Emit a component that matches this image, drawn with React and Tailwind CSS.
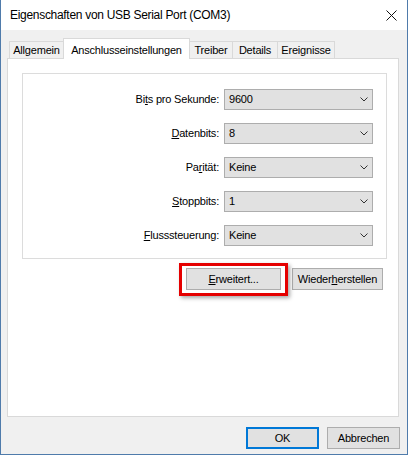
import React from "react";

const dialogFont = { fontFamily: '"Liberation Sans", Arial, sans-serif' };

function Chevron() {
  return (
    <svg width="8" height="5" viewBox="0 0 8 5" className="text-[#333]">
      <polyline points="0.5,0.5 4,4 7.5,0.5" fill="none" stroke="currentColor" strokeWidth="1" />
    </svg>
  );
}

function Combo({ label, value }) {
  return (
    <div className="flex items-center justify-end pr-[13px]">
      <span className="text-[11px] tracking-[-0.2px] text-black">{label}</span>
      <div className="ml-[5px] flex h-[21px] w-[149px] items-center justify-between border border-[#adadad] bg-[#e1e1e1] pl-[4px] pr-[4px]">
        <span className="text-[11px] tracking-[-0.2px] text-black">{value}</span>
        <Chevron />
      </div>
    </div>
  );
}

const tabs = [
  { name: "Allgemein", w: "w-[55px]" },
  { name: "Anschlusseinstellungen", w: "w-[127px]", active: true },
  { name: "Treiber", w: "w-[44px]" },
  { name: "Details", w: "w-[46px]" },
  { name: "Ereignisse", w: "w-[58px]" }
];

export default function App() {
  return (
    <div className="flex h-[455px] w-[408px] flex-col border-x border-b border-[#4f7bab] bg-[#f0f0f0]" style={dialogFont}>
      {/* title bar */}
      <div className="flex h-[30px] items-center justify-between bg-white pl-[9px] pr-[10px]">
        <span className="text-[12px] tracking-[-0.3px] text-black">
          Eigenschaften von USB Serial Port (COM3)
        </span>
        <svg width="11" height="11" viewBox="0 0 11 11">
          <path d="M0.5 0.5 L10.5 10.5 M10.5 0.5 L0.5 10.5" stroke="#111" strokeWidth="1" />
        </svg>
      </div>

      {/* tabs */}
      <div className="mt-[8px] ml-[8px] flex h-[20px] items-end">
        {tabs.map((t, i) =>
          t.active ? (
            <div
              key={t.name}
              className={`relative z-10 -mb-px -ml-px flex h-[21px] ${t.w} items-start justify-center border-x border-t border-[#d9d9d9] bg-white pt-[3px] text-[11px] tracking-[-0.2px] text-black`}
            >
              {t.name}
            </div>
          ) : (
            <div
              key={t.name}
              className={`${i > 0 ? "-ml-px" : ""} flex h-[17px] ${t.w} items-center justify-center border-x border-t border-[#d9d9d9] bg-[#f0f0f0] pt-[1px] text-[11px] tracking-[-0.2px] text-black`}
            >
              {t.name}
            </div>
          )
        )}
      </div>

      {/* panel */}
      <div className="ml-[6px] h-[359px] w-[392px] border border-[#d9d9d9] bg-white pl-[14px] pt-[14px]">
        <div className="flex h-[186px] w-[365px] flex-col gap-[13px] border border-[#dcdcdc] pt-[15px]">
          <Combo label={<>Bi<u>t</u>s pro Sekunde:</>} value="9600" />
          <Combo label={<><u>D</u>atenbits:</>} value="8" />
          <Combo label={<>Pa<u>r</u>ität:</>} value="Keine" />
          <Combo label={<><u>S</u>toppbits:</>} value="1" />
          <Combo label={<><u>F</u>lusssteuerung:</>} value="Keine" />
        </div>

        <div className="mt-[9px] flex justify-end gap-[11px] pr-[15px]">
          <div className="relative">
            <button className="flex h-[22px] w-[95px] items-center justify-center border border-[#adadad] bg-[#e1e1e1] text-[11px] tracking-[-0.2px] text-black">
              <span><u>E</u>rweitert...</span>
            </button>
            <div className="pointer-events-none absolute -top-[5px] -bottom-[6px] -left-[7px] -right-[7px] border-[3px] border-[#e50000] shadow-[2px_2px_4px_rgba(0,0,0,0.35)]" />
          </div>
          <button className="flex h-[22px] w-[91px] items-center justify-center border border-[#adadad] bg-[#e1e1e1] text-[11px] tracking-[-0.2px] text-black">
            <span>Wieder<u>h</u>erstellen</span>
          </button>
        </div>
      </div>

      {/* bottom buttons */}
      <div className="mt-[10px] flex justify-end gap-[8px] pr-[7px]">
        <button className="flex h-[22px] w-[73px] items-center justify-center border-2 border-[#0078d7] bg-[#e1e1e1] text-[11px] tracking-[-0.2px] text-black">
          OK
        </button>
        <button className="flex h-[22px] w-[73px] items-center justify-center border border-[#adadad] bg-[#e1e1e1] text-[11px] tracking-[-0.2px] text-black">
          Abbrechen
        </button>
      </div>
    </div>
  );
}
